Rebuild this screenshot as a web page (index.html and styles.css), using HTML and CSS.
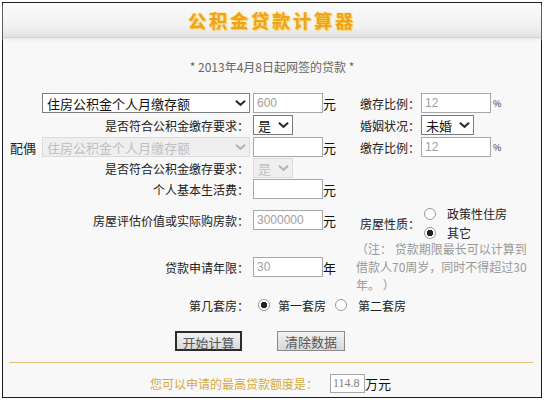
FILE: index.html
```html
<!DOCTYPE html>
<html lang="zh-CN">
<head>
  <meta charset="UTF-8" />
  <title>公积金贷款计算器</title>
  <link rel="stylesheet" href="styles.css">
</head>
<body>

  <div class="calc">
    <div class="calc-head">
      <h1>公积金贷款计算器</h1>
    </div>

    <p class="intro">* 2013年4月8日起网签的贷款 *</p>

    <!-- 本人 -->
    <div class="row">
      <div class="col-main">
        <span class="side"></span>
        <span class="sel sel-wide">
          <select><option>住房公积金个人月缴存额</option></select>
          <svg class="chev" viewBox="0 0 12 8"><path d="M1 1.5 L6 6 L11 1.5"/></svg>
        </span>
      </div>
      <div class="col-input"><input class="txt" type="text" value="600"><span class="unit">元</span></div>
      <div class="col-label">缴存比例：</div>
      <div class="col-ctl"><input class="txt" type="text" value="12"><span class="pct">%</span></div>
    </div>

    <div class="row">
      <div class="col-main label">是否符合公积金缴存要求：</div>
      <div class="col-input">
        <span class="sel sel-short">
          <select><option>是</option></select>
          <svg class="chev" viewBox="0 0 12 8"><path d="M1 1.5 L6 6 L11 1.5"/></svg>
        </span>
      </div>
      <div class="col-label">婚姻状况：</div>
      <div class="col-ctl">
        <span class="sel sel-mid">
          <select><option>未婚</option></select>
          <svg class="chev" viewBox="0 0 12 8"><path d="M1 1.5 L6 6 L11 1.5"/></svg>
        </span>
      </div>
    </div>

    <!-- 配偶 -->
    <div class="row">
      <div class="col-main">
        <span class="side">配偶</span>
        <span class="sel sel-wide off">
          <select disabled><option>住房公积金个人月缴存额</option></select>
          <svg class="chev" viewBox="0 0 12 8"><path d="M1 1.5 L6 6 L11 1.5"/></svg>
        </span>
      </div>
      <div class="col-input"><input class="txt" type="text" value=""><span class="unit">元</span></div>
      <div class="col-label">缴存比例：</div>
      <div class="col-ctl"><input class="txt" type="text" value="12"><span class="pct">%</span></div>
    </div>

    <div class="row row-thin">
      <div class="col-main label">是否符合公积金缴存要求：</div>
      <div class="col-input">
        <span class="sel sel-short off">
          <select disabled><option>是</option></select>
          <svg class="chev" viewBox="0 0 12 8"><path d="M1 1.5 L6 6 L11 1.5"/></svg>
        </span>
      </div>
    </div>

    <div class="row">
      <div class="col-main label">个人基本生活费：</div>
      <div class="col-input"><input class="txt" type="text" value=""><span class="unit">元</span></div>
    </div>

    <!-- 房屋 -->
    <div class="split">
      <div class="split-left">
        <div class="row row-price">
          <div class="col-main label">房屋评估价值或实际购房款：</div>
          <div class="col-input"><input class="txt" type="text" value="3000000"><span class="unit">元</span></div>
        </div>
        <div class="row row-years">
          <div class="col-main label">贷款申请年限：</div>
          <div class="col-input"><input class="txt" type="text" value="30"><span class="unit">年</span></div>
        </div>
      </div>
      <div class="split-right">
        <div class="nature">
          <div class="col-label">房屋性质：</div>
          <div class="radios">
            <label class="opt"><input type="radio" name="nature">政策性住房</label>
            <label class="opt"><input type="radio" name="nature" checked>其它</label>
          </div>
        </div>
        <p class="note">（注： 贷款期限最长可以计算到<br>借款人70周岁，同时不得超过30<br>年。 ）</p>
      </div>
    </div>

    <div class="row row-thin row-which">
      <div class="col-main label">第几套房：</div>
      <label class="opt first"><input type="radio" name="which" checked>第一套房</label>
      <label class="opt second"><input type="radio" name="which">第二套房</label>
    </div>

    <div class="actions">
      <button class="btn btn-main">开始计算</button>
      <button class="btn">清除数据</button>
    </div>

    <div class="rule"></div>

    <div class="result">
      <span class="result-label">您可以申请的最高贷款额度是：</span>
      <input class="txt result-value" type="text" value="114.8">
      <span class="result-unit">万元</span>
    </div>
  </div>

</body>
</html>
```

FILE: styles.css
```css
body {
  margin: 2px 0 0 2px;
  background-color: #fff;
  font-family: "Noto Sans CJK SC", "Liberation Sans", sans-serif;
  font-size: 12px;
  color: #222;
}
.calc {
  width: 538px;
  height: 394px;
  border: 1px solid #1c1c1c;
  background-color: #f8f8f8;
}
.calc-head {
  height: 34px;
  background: linear-gradient(#fbfbfb, #f1f1f1 70%, #e2e2e2);
  border-bottom: 1px solid #d2d2d2;
  box-shadow: 0 2px 2px #ececec;
}
.calc-head h1 {
  margin: 0;
  padding-top: 2px;
  line-height: 30px;
  text-align: center;
  font-size: 18px;
  font-weight: bold;
  letter-spacing: 3px;
  color: #eea21c;
  text-shadow: 0 0 1px #ffe27a, 0 0 2px #fcd65a, 1px 1px 1px #f6c84a;
}
.intro {
  margin: 20px 0 0;
  line-height: 18px;
  text-align: center;
  color: #666;
}

.row {
  display: flex;
  align-items: center;
  height: 22px;
}
.intro + .row {
  margin-top: 16px;
}
.row-thin {
  height: 20px;
}
.col-main {
  display: flex;
  align-items: center;
  width: 247px;
}
.col-main.label {
  justify-content: flex-end;
  padding-right: 1px;
  width: 246px;
}
.side {
  width: 39px;
  padding-left: 7px;
  box-sizing: border-box;
  font-size: 13px;
  color: #222;
}
.col-input {
  display: flex;
  align-items: center;
  width: 103px;
  padding-left: 3px;
  box-sizing: border-box;
}
.col-label {
  width: 67px;
  text-align: right;
}
.col-ctl {
  display: flex;
  align-items: center;
  padding-left: 1px;
}

.txt {
  width: 70px;
  height: 20px;
  box-sizing: border-box;
  margin: 0;
  padding: 0 3px;
  border: 1px solid #a8a8a8;
  background: #fff;
  font-family: "Liberation Sans", sans-serif;
  font-size: 12px;
  color: #a0a0a0;
}
.unit {
  font-size: 13px;
  color: #111;
}
.pct {
  margin-left: 2px;
  font-size: 9px;
  color: #333;
}

.sel {
  position: relative;
  display: inline-block;
}
.sel select {
  -webkit-appearance: none;
  appearance: none;
  display: block;
  height: 20px;
  margin: 0;
  padding: 0 0 0 4px;
  border: 1px solid #7a7a7a;
  border-radius: 0;
  background: #fff;
  font-family: "Noto Sans CJK SC", sans-serif;
  font-size: 13px;
  color: #111;
}
.sel-wide select {
  width: 208px;
}
.sel-short select {
  width: 40px;
}
.sel-mid select {
  width: 53px;
}
.chev {
  position: absolute;
  right: 4px;
  top: 6px;
  width: 11px;
  height: 8px;
  fill: none;
  stroke: #2a2a2a;
  stroke-width: 2.2;
}
.sel.off select {
  border-color: #cfcfcf;
  background: #ececec;
  color: #a8a8a8;
}
.sel.off .chev {
  stroke: #b4b4b4;
}

.split {
  display: flex;
  height: 94px;
}
.split-left {
  width: 350px;
}
.row-price {
  margin-top: 9px;
}
.row-years {
  margin-top: 25px;
}
.nature {
  display: flex;
  align-items: center;
  padding-top: 4px;
}
.radios {
  padding-left: 4px;
}
.opt {
  display: flex;
  align-items: center;
  height: 19px;
  font-size: 12px;
  color: #222;
}
.opt input {
  -webkit-appearance: none;
  appearance: none;
  width: 12px;
  height: 12px;
  margin: 0 11px 0 0;
  border: 1px solid #9a9a9a;
  border-radius: 50%;
  background: #fff;
}
.opt input:checked {
  background: radial-gradient(circle, #222 0 3px, #fff 3.5px);
}
.note {
  margin: -2px 0 0;
  padding-left: 3px;
  line-height: 18px;
  color: #999;
}

.row-which {
  margin-top: 1px;
}
.row-which .first input {
  margin-left: 8px;
  margin-right: 8px;
}
.row-which .second {
  margin-left: 9px;
}

.actions {
  display: flex;
  gap: 35px;
  margin-top: 16px;
  padding-left: 172px;
}
.btn {
  width: 68px;
  height: 20px;
  padding: 0;
  border: 1px solid #8a8a8a;
  background: linear-gradient(#f2f2f2, #d8d8d8);
  font-family: "Noto Sans CJK SC", sans-serif;
  font-size: 13px;
  color: #555;
}
.btn-main {
  width: 67px;
  border: 2px solid #2b2b2b;
}

.rule {
  height: 1px;
  margin: 11px 8px 0 6px;
  background: #e3c27c;
}

.result {
  display: flex;
  align-items: center;
  margin-top: 11px;
  padding-left: 147px;
}
.result-label {
  color: #d6aa3e;
}
.result-value {
  width: 35px;
  height: 19px;
  margin-left: 12px;
  padding: 0 2px;
  font-family: "Liberation Serif", serif;
  color: #808080;
}
.result-unit {
  font-size: 13px;
  color: #111;
}
```
